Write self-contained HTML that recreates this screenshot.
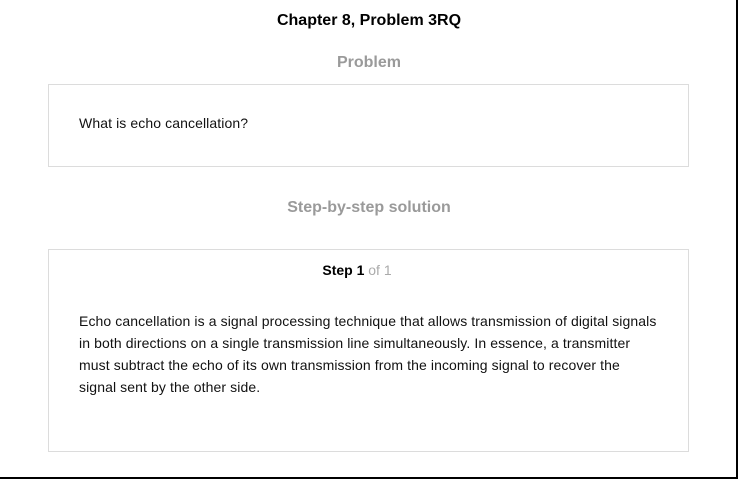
<!DOCTYPE html>
<html><head><style>
*{margin:0;padding:0;box-sizing:border-box}
body{width:738px;height:479px;background:#fff;font-family:"Liberation Sans",Arial,sans-serif;position:relative;overflow:hidden}
.rb{position:absolute;left:736px;top:0;width:2px;height:479px;background:#000}
.bb{position:absolute;left:0;top:477px;width:738px;height:2px;background:#000}
h1{position:absolute;left:0;width:738px;top:12px;text-align:center;font-size:16px;font-weight:bold;color:#000}
.sub{position:absolute;left:0;width:738px;text-align:center;font-size:16px;font-weight:bold;color:#9a9a9a}
.box{position:absolute;left:48px;width:641px;border:1px solid #dcdcdc}
.t{position:absolute;left:79px;font-size:14px;color:#111;line-height:22px;letter-spacing:0.1px}
</style></head><body>
<h1>Chapter 8, Problem 3RQ</h1>
<div class="sub" style="top:54px">Problem</div>
<div class="box" style="top:84px;height:83px"></div>
<div class="t" style="top:112px">What is echo cancellation?</div>
<div class="sub" style="top:199px">Step-by-step solution</div>
<div class="box" style="top:249px;height:203px"></div>
<div style="position:absolute;left:0;width:714px;top:262px;text-align:center;font-size:14px"><b>Step 1</b> <span style="color:#aaa">of 1</span></div>
<div class="t" style="top:310px;width:582px">Echo cancellation is a signal processing technique that allows transmission of digital signals<br>in both directions on a single transmission line simultaneously. In essence, a transmitter<br>must subtract the echo of its own transmission from the incoming signal to recover the<br>signal sent by the other side.</div>
<div class="rb"></div><div class="bb"></div>
</body></html>
